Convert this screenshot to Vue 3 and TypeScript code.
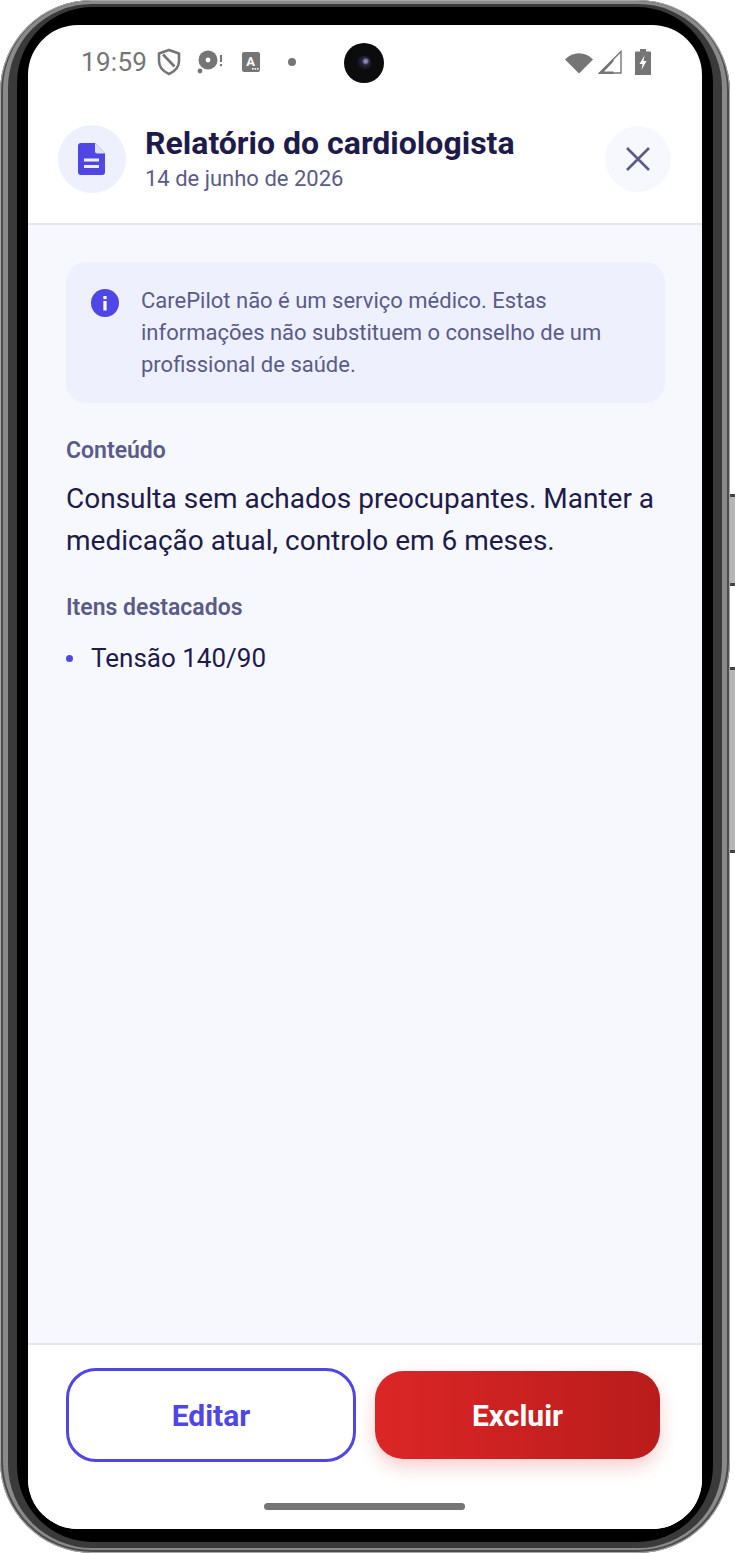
<script setup lang="ts">
const disclaimer = 'CarePilot não é um serviço médico. Estas informações não substituem o conselho de um profissional de saúde.'
const highlights: string[] = ['Tensão 140/90']
</script>

<template>
  <div class="stage">
    <div class="case">
      <span class="key key-a"></span>
      <span class="key key-b"></span>
      <div class="band">
        <div class="rim">
          <div class="bezel">
            <div class="screen">
              <div class="camera"><span class="lens"></span></div>
              <div class="status">
                <div class="status-left">
                  <span class="clock">19:59</span>
                  <svg class="s-shield" width="24" height="28" viewBox="0 0 24 28" fill="none" stroke="#757575" stroke-width="2.6">
                    <path d="M12 2 L22 5.5 V13 C22 19 17.5 23.5 12 26 C6.5 23.5 2 19 2 13 V5.5 Z" stroke-linejoin="round" />
                    <path d="M6 6.5 L17.5 18.5" />
                  </svg>
                  <svg class="s-disc" width="26" height="26" viewBox="0 0 26 26">
                    <circle cx="11" cy="11" r="9.5" fill="#757575" />
                    <circle cx="11" cy="11" r="2.4" fill="#fff" />
                    <circle cx="3" cy="22" r="2.4" fill="#757575" />
                    <rect x="23" y="6" width="2" height="7" fill="#757575" />
                    <rect x="23" y="15" width="2" height="2.2" fill="#757575" />
                  </svg>
                  <svg class="s-a" width="18" height="20" viewBox="0 0 18 20">
                    <rect width="18" height="20" rx="2" fill="#757575" />
                    <text x="8.5" y="13.5" text-anchor="middle" class="s-a-letter">A</text>
                    <rect x="10" y="16" width="1.6" height="1.6" fill="#fff" />
                    <rect x="12.5" y="16" width="1.6" height="1.6" fill="#fff" />
                    <rect x="15" y="16" width="1.6" height="1.6" fill="#fff" />
                  </svg>
                  <span class="s-dot"></span>
                </div>
                <div class="status-right">
                  <svg width="28" height="24" viewBox="0 0 28 24"><path d="M0 9.5 C8 1 20 1 28 9.5 L14 23.5 Z" fill="#757575" /></svg>
                  <svg class="s-signal" width="24" height="24" viewBox="0 0 24 24" fill="none">
                    <path d="M23 1.5 V23 H1.5 Z" stroke="#757575" stroke-width="1.4" />
                    <path d="M0 24 L15.5 8.5 V11.5 L6 21.5 H15.5 V24 Z" fill="#757575" />
                  </svg>
                  <svg class="s-batt" width="16" height="26" viewBox="0 0 16 26">
                    <path d="M5 0 H11 V2.5 H15 Q16 2.5 16 3.5 V26 H0 V3.5 Q0 2.5 1 2.5 H5 Z" fill="#757575" />
                    <path d="M9.5 6.5 L4.5 15 H7.5 L6.5 21 L11.5 12 H8.5 Z" fill="#fff" />
                  </svg>
                </div>
              </div>

              <header class="head">
                <div class="doc-badge">
                  <svg width="28" height="32" viewBox="0 0 28 32">
                    <path d="M3 0 H17 L27 10.5 V29 Q27 32 24 32 H3 Q0 32 0 29 V3 Q0 0 3 0 Z" fill="#4f46e5" />
                    <path d="M17 0 L27 10.5 H19 Q17 10.5 17 8.5 Z" fill="#dfe0fb" />
                    <rect x="6" y="15.5" width="15" height="3" fill="#eef0fe" />
                    <rect x="6" y="22" width="15" height="3" fill="#eef0fe" />
                  </svg>
                </div>
                <div class="head-text">
                  <h1 class="title">Relatório do cardiologista</h1>
                  <p class="date">14 de junho de 2026</p>
                </div>
                <button class="close" type="button" aria-label="Fechar">
                  <svg width="24" height="24" viewBox="0 0 24 24" fill="none" stroke="#5b5b8a" stroke-width="2.6">
                    <path d="M1 1 L23 23 M23 1 L1 23" />
                  </svg>
                </button>
              </header>

              <main class="content">
                <section class="notice">
                  <svg class="info" width="28" height="28" viewBox="0 0 28 28">
                    <circle cx="14" cy="14" r="14" fill="#4f46e5" />
                    <rect x="12.4" y="12" width="3.2" height="9.5" fill="#fff" />
                    <rect x="12.4" y="7" width="3.2" height="3.2" fill="#fff" />
                  </svg>
                  <p class="notice-text">{{ disclaimer }}</p>
                </section>

                <h2 class="label">Conteúdo</h2>
                <p class="body-text">Consulta sem achados preocupantes. Manter a medicação atual, controlo em 6 meses.</p>

                <h2 class="label label-second">Itens destacados</h2>
                <ul class="items">
                  <li v-for="item in highlights" :key="item" class="item">
                    <span class="bullet"></span>
                    <span>{{ item }}</span>
                  </li>
                </ul>
              </main>

              <footer class="foot">
                <div class="actions">
                  <button class="btn btn-edit" type="button">Editar</button>
                  <button class="btn btn-delete" type="button">Excluir</button>
                </div>
                <div class="home"></div>
              </footer>
            </div>
          </div>
        </div>
      </div>
    </div>
  </div>
</template>

<style>
html, body { margin: 0; background: #fff; }
</style>

<style scoped>
.stage {
  width: 735px;
  height: 1553px;
  overflow: hidden;
  background: #fff;
  font-family: Roboto, "Liberation Sans", sans-serif;
}
.case {
  position: relative;
  box-sizing: border-box;
  width: 730px;
  height: 1553px;
  padding: 1px 3px 3px;
  border-radius: 92px;
  background: #4c4c4c;
  box-shadow: inset 0 0 0 1px #a8a8a8;
}
.key {
  position: absolute;
  left: 730px;
  width: 5px;
  background: #b5b5b5;
  border-top: 3px solid #444;
  border-bottom: 3px solid #444;
}
.key-a { top: 494px; height: 86px; }
.key-b { top: 667px; height: 180px; }
.band {
  box-sizing: border-box;
  height: 100%;
  padding: 3px 5px 2px;
  border-radius: 89px;
  background: #8a8a8a;
}
.rim {
  box-sizing: border-box;
  height: 100%;
  padding: 3px 9px 6px;
  border-radius: 84px;
  background: #3a3a3a;
}
.bezel {
  box-sizing: border-box;
  height: 100%;
  padding: 18px 11px 13px;
  border-radius: 76px;
  background: #000;
}
.screen {
  position: relative;
  display: flex;
  flex-direction: column;
  height: 100%;
  overflow: hidden;
  border-radius: 50px;
  background: #fff;
}
.camera {
  position: absolute;
  top: 18px;
  left: 316px;
  display: flex;
  align-items: center;
  justify-content: center;
  width: 40px;
  height: 40px;
  border-radius: 50%;
  background: #0c0c0e;
}
.lens {
  width: 14px;
  height: 14px;
  border-radius: 50%;
  background: radial-gradient(circle at 62% 38%, #8f86b5 0 12%, #26263c 30%, #0e0e14 75%);
}
.status {
  display: flex;
  align-items: center;
  justify-content: space-between;
  height: 74px;
  padding: 0 51px 0 53px;
  box-sizing: border-box;
}
.status-left, .status-right { display: flex; align-items: center; }
.clock {
  font-size: 26px;
  letter-spacing: 0.3px;
  color: #757575;
}
.s-shield { margin-left: 10px; }
.s-disc { margin-left: 16px; }
.s-a { margin-left: 19px; }
.s-a-letter { font: 700 13px Roboto, sans-serif; fill: #fff; }
.s-dot {
  width: 8px;
  height: 8px;
  margin-left: 28px;
  border-radius: 50%;
  background: #757575;
}
.status-right { gap: 0; }
.s-signal { margin-left: 5px; }
.s-batt { margin-left: 13px; }
.head {
  display: flex;
  align-items: center;
  box-sizing: border-box;
  height: 126px;
  padding: 0 31px 4px 30px;
  border-bottom: 2px solid #e4e5f4;
}
.doc-badge {
  display: flex;
  flex: none;
  align-items: center;
  justify-content: center;
  width: 68px;
  height: 68px;
  border-radius: 50%;
  background: #eef0fe;
}
.head-text { flex: 1; margin-left: 19px; }
.title {
  margin: 0;
  font-size: 32px;
  font-weight: 700;
  line-height: 40px;
  color: #1e1b4b;
}
.date {
  margin: 0;
  font-size: 22px;
  line-height: 32px;
  color: #5b5b8a;
}
.close {
  display: flex;
  flex: none;
  align-items: center;
  justify-content: center;
  width: 66px;
  height: 66px;
  padding: 0;
  border: 0;
  border-radius: 50%;
  background: #f7f8fe;
}
.content {
  flex: 1;
  padding: 37px 37px 0 38px;
  background: #f7f8fe;
}
.notice {
  display: flex;
  align-items: flex-start;
  box-sizing: border-box;
  height: 141px;
  padding: 23px 30px 0 25px;
  border-radius: 20px;
  background: #eef0fe;
}
.info { flex: none; margin-top: 4px; }
.notice-text {
  margin: 0 0 0 22px;
  font-size: 22px;
  line-height: 32px;
  color: #5b5b8a;
}
.label {
  margin: 32px 0 0;
  font-size: 23px;
  font-weight: 600;
  line-height: 32px;
  color: #5b5b8a;
}
.label-second { margin-top: 30px; }
.body-text {
  margin: 11px 0 0;
  font-size: 28px;
  line-height: 42px;
  color: #1e1b4b;
}
.items { margin: 16px 0 0; padding: 0; list-style: none; }
.item {
  display: flex;
  align-items: center;
  font-size: 26px;
  line-height: 36px;
  color: #1e1b4b;
}
.bullet {
  flex: none;
  width: 7px;
  height: 7px;
  margin-right: 18px;
  border-radius: 50%;
  background: #4f46e5;
}
.foot {
  position: relative;
  height: 186px;
  box-sizing: border-box;
  border-top: 2px solid #e4e5f4;
  background: #fff;
}
.actions {
  display: flex;
  align-items: center;
  gap: 19px;
  padding: 23px 40px 0 38px;
}
.btn {
  font-family: inherit;
  font-size: 30px;
  font-weight: 700;
  padding: 0;
}
.btn-edit {
  box-sizing: border-box;
  width: 290px;
  height: 94px;
  border: 3px solid #4f46e5;
  border-radius: 30px;
  background: #fff;
  color: #4f46e5;
}
.btn-delete {
  width: 285px;
  height: 88px;
  border: 0;
  border-radius: 28px;
  background: linear-gradient(90deg, #dc2626, #b91c1c);
  color: #fff;
  box-shadow: 0 8px 18px rgba(220, 38, 38, 0.22);
}
.home {
  position: absolute;
  left: 236px;
  bottom: 19px;
  width: 201px;
  height: 7px;
  border-radius: 4px;
  background: #757575;
}
</style>
